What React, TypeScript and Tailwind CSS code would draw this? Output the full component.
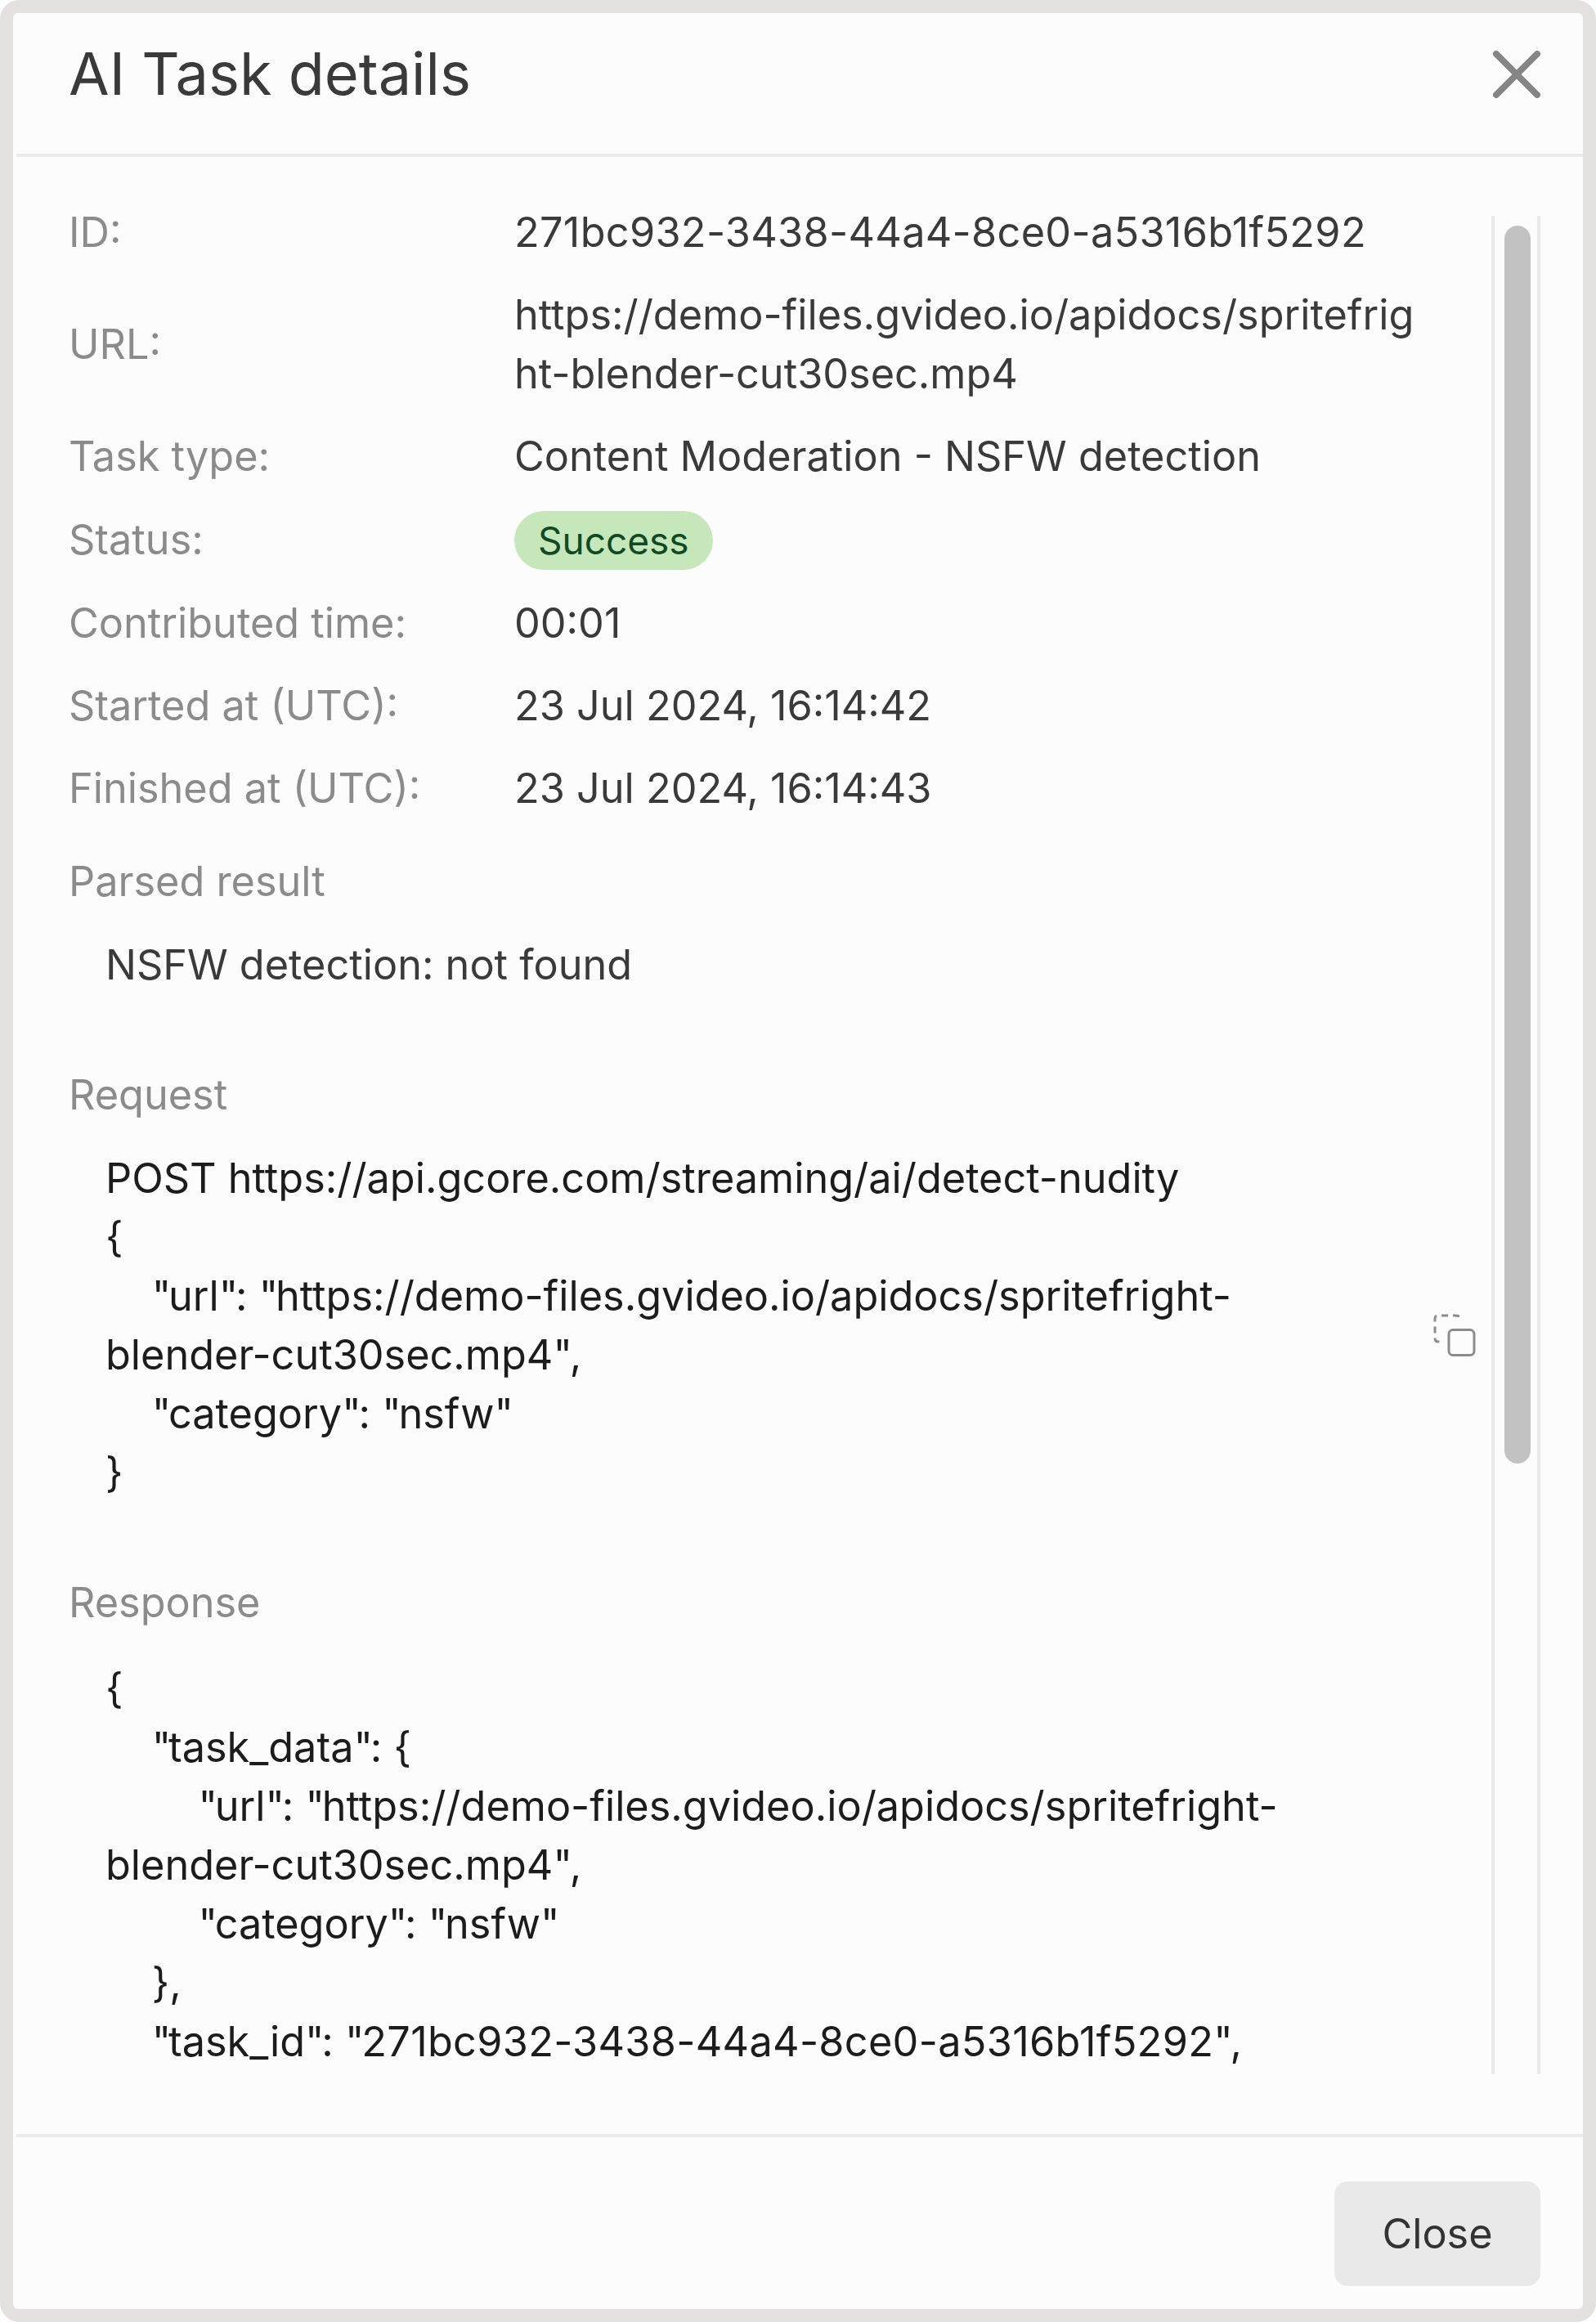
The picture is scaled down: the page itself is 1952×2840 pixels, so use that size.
const TASK_ID = "271bc932-3438-44a4-8ce0-a5316b1f5292";

const rows = [
  { label: "ID:", value: TASK_ID },
  { label: "URL:", value: "https://demo-files.gvideo.io/apidocs/spritefright-blender-cut30sec.mp4" },
  { label: "Task type:", value: "Content Moderation - NSFW detection" },
  { label: "Status:", value: null },
  { label: "Contributed time:", value: "00:01" },
  { label: "Started at (UTC):", value: "23 Jul 2024, 16:14:42" },
  { label: "Finished at (UTC):", value: "23 Jul 2024, 16:14:43" },
];

const requestText = `POST https://api.gcore.com/streaming/ai/detect-nudity
{
    "url": "https://demo-files.gvideo.io/apidocs/spritefright-blender-cut30sec.mp4",
    "category": "nsfw"
}`;

const responseText = `{
    "task_data": {
        "url": "https://demo-files.gvideo.io/apidocs/spritefright-blender-cut30sec.mp4",
        "category": "nsfw"
    },
    "task_id": "271bc932-3438-44a4-8ce0-a5316b1f5292",`;

const Code = ({ text }: { text: string }) => (
  <>
    {text.split(/("|271bc932-3438-44a4-8ce0-a5316b1f5292)/).map((part, index) => {
      if (part === '"') {
        return (
          <span key={index} className="tracking-[-3.2px]">
            {part}
          </span>
        );
      }
      if (part === TASK_ID) {
        return (
          <span key={index} className="tracking-[0.3px]">
            {part}
          </span>
        );
      }
      return part;
    })}
  </>
);

const CopyIcon = () => (
  <svg width="56" height="56" viewBox="0 0 56 56" fill="none" className="absolute right-[18px] top-[200px]">
    <path
      d="M35 5C33 4 31 4 29 4H9C6.5 4 5 5.5 5 8V32C5 34.5 6.5 36 9 36H13"
      stroke="#8c8c8c"
      strokeWidth="3"
      strokeDasharray="8 6"
    />
    <rect x="22" y="21.5" width="31" height="31" rx="5" stroke="#8c8c8c" strokeWidth="3" />
  </svg>
);

const App = () => {
  return (
    <div className="w-[1952px] h-[2840px] bg-white font-['Inter',sans-serif]">
      <div className="w-full h-full rounded-[24px] bg-[#e3e0df] p-4">
        <div className="w-full h-full rounded-[6px] bg-[#fcfcfc] flex flex-col overflow-hidden">
          <div className="h-[172px] shrink-0 flex items-start justify-between pt-[24px] pl-[68px] pr-[52px]">
            <h1 className="text-[72px] leading-[100px] text-[#3a3a3a]">AI Task details</h1>
            <svg width="58" height="58" viewBox="0 0 58 58" fill="none" className="mt-[22px]">
              <path d="M4 4L54 54M54 4L4 54" stroke="#858585" strokeWidth="8" strokeLinecap="round" />
            </svg>
          </div>
          <div className="h-1 ml-1 shrink-0 bg-[#ebebeb]" />

          <div className="flex-1 min-h-0 flex pt-[56px] pb-[73px] pl-[68px] pr-[52px]">
            <div className="flex-1 min-w-0 overflow-hidden text-[50.4px] leading-[72px]">
              <div className="grid grid-cols-[545px_1fr] gap-y-[28.8px] items-center pr-[90px]">
                {rows.map((row) => (
                  <div key={row.label} className="contents">
                    <div className="text-[#8b8b8b]">{row.label}</div>
                    {row.value ? (
                      <div className={row.value === TASK_ID ? "text-[#3a3a3a] tracking-[0.3px]" : "text-[#3a3a3a] break-all"}>
                        {row.value}
                      </div>
                    ) : (
                      <div className="pt-[2px]">
                        <span className="inline-block h-[72px] rounded-full bg-[#c5e7b9] px-[29px] text-[46px] text-[#0f4a25]">
                          Success
                        </span>
                      </div>
                    )}
                  </div>
                ))}
              </div>

              <div className="mt-[42px] text-[#8b8b8b]">Parsed result</div>
              <div className="mt-[30px] pl-[45px] text-[#3a3a3a]">NSFW detection: not found</div>

              <div className="mt-[87px] text-[#8b8b8b]">Request</div>
              <div className="relative mt-[30px] pl-[45px] pr-[134px] text-[#1c1c1c] whitespace-pre-wrap">
                <Code text={requestText} />
                <CopyIcon />
              </div>

              <div className="mt-[87px] text-[#8b8b8b]">Response</div>
              <div className="mt-[33px] pl-[45px] pr-[134px] text-[#1c1c1c] whitespace-pre-wrap">
                <Code text={responseText} />
              </div>
            </div>

            <div className="w-[60px] mt-4 shrink-0 border-x-4 border-[#ebebeb] pl-3 pt-3">
              <div className="w-8 h-[1514px] rounded-full bg-[#c2c2c2]" />
            </div>
          </div>

          <div className="h-1 ml-1 shrink-0 bg-[#ebebeb]" />
          <div className="h-[210px] shrink-0 flex justify-end pt-[54px] pr-[52px]">
            <button className="w-[252px] h-[128px] rounded-[16px] bg-[#e9e9e9] text-[50.4px] text-[#333333]">
              Close
            </button>
          </div>
        </div>
      </div>
    </div>
  );
};

export default App;
